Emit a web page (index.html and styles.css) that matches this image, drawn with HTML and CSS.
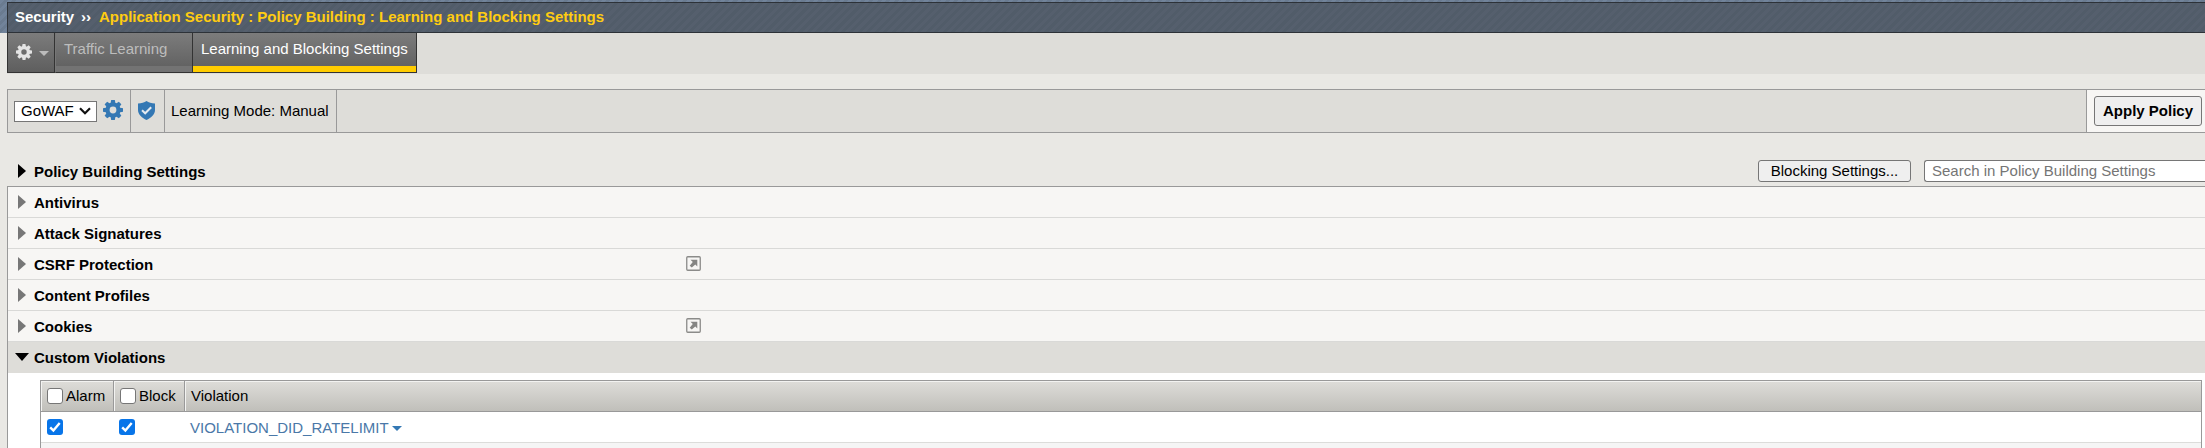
FILE: index.html
```html
<!DOCTYPE html>
<html lang="en">
<head>
<meta charset="utf-8">
<title>Learning and Blocking Settings</title>
<link rel="stylesheet" href="styles.css">
</head>
<body>
<svg class="defs" width="0" height="0" aria-hidden="true">
  <symbol id="gear" viewBox="0 0 20 20">
    <g fill="currentColor">
      <path fill-rule="evenodd" d="M10 2.500a7.500 7.500 0 1 0 0 15a7.500 7.500 0 1 0 0-15zM10 6.600a3.400 3.400 0 1 1 0 6.800a3.400 3.400 0 1 1 0-6.800z"/>
      <path id="tooth" d="M8.200 0h3.600l.8 4H7.400z"/>
      <use href="#tooth" transform="rotate(45 10 10)"/>
      <use href="#tooth" transform="rotate(90 10 10)"/>
      <use href="#tooth" transform="rotate(135 10 10)"/>
      <use href="#tooth" transform="rotate(180 10 10)"/>
      <use href="#tooth" transform="rotate(225 10 10)"/>
      <use href="#tooth" transform="rotate(270 10 10)"/>
      <use href="#tooth" transform="rotate(315 10 10)"/>
    </g>
  </symbol>
  <symbol id="popout" viewBox="0 0 15 15">
    <rect x=".75" y=".75" width="13.5" height="13.5" rx="1" fill="#f7f6f4" stroke="#8b8b89" stroke-width="1.3"/>
    <path d="M4.500 3.700h6.800v6.800L9.300 8.500 5.800 11.600 3.700 9.700 6.800 6z" fill="#858583"/>
  </symbol>
</svg>
<header class="masthead">
  <div class="crumbs"><span class="root">Security</span><span class="sep">››</span><span class="path">Application Security : Policy Building : Learning and Blocking Settings</span></div>
</header>
<nav class="tabs">
  <div class="tab tab-menu"><svg class="menu-gear"><use href="#gear"/></svg><i class="caret"></i></div>
  <div class="tab tab-traffic"><span>Traffic Learning</span></div>
  <div class="tab tab-active"><span>Learning and Blocking Settings</span></div>
</nav>
<section class="toolbar">
  <div class="cell policy">
    <div class="select"><span>GoWAF</span><svg width="12" height="8" viewBox="0 0 12 8"><path d="M1 1.300L6 6.300l5-5" fill="none" stroke="#111" stroke-width="2.200"/></svg></div>
    <svg class="blue-gear"><use href="#gear"/></svg>
  </div>
  <div class="cell shield">
    <svg width="17" height="19" viewBox="0 0 17 19"><path d="M8.500 0C6.400 1.700 3.500 2.400 0 2.400V9c0 4.800 4.400 8 8.500 10C12.600 17 17 13.800 17 9V2.400C13.500 2.400 10.600 1.700 8.500 0z" fill="#3478b4"/><path d="M4 9.200l3.200 3.100 6-6" fill="none" stroke="#e4eaf0" stroke-width="2"/></svg>
  </div>
  <div class="cell mode"><span>Learning Mode: Manual</span></div>
  <div class="apply"><button class="btn btn-apply">Apply Policy</button></div>
</section>
<section class="settings-head">
  <i class="arrow black"></i><h2>Policy Building Settings</h2>
  <button class="btn btn-blocking">Blocking Settings...</button>
  <input class="search" type="text" placeholder="Search in Policy Building Settings">
</section>
<main class="settings">
  <div class="row"><i class="arrow"></i><h3>Antivirus</h3></div>
  <div class="row"><i class="arrow"></i><h3>Attack Signatures</h3></div>
  <div class="row"><i class="arrow"></i><h3>CSRF Protection</h3><svg class="popout"><use href="#popout"/></svg></div>
  <div class="row"><i class="arrow"></i><h3>Content Profiles</h3></div>
  <div class="row"><i class="arrow"></i><h3>Cookies</h3><svg class="popout"><use href="#popout"/></svg></div>
  <div class="row open"><i class="arrow down"></i><h3>Custom Violations</h3></div>
  <div class="detail">
    <div class="table">
      <div class="grid thead">
        <div class="th"><i class="check"></i><span>Alarm</span></div>
        <div class="th"><i class="check"></i><span>Block</span></div>
        <div class="th"><span>Violation</span></div>
      </div>
      <div class="grid tbody">
        <div class="td"><i class="check on"><svg viewBox="0 0 16 16"><path d="M3.200 8.400l3.200 3.200 6.300-7.500"/></svg></i></div>
        <div class="td"><i class="check on"><svg viewBox="0 0 16 16"><path d="M3.200 8.400l3.200 3.200 6.300-7.500"/></svg></i></div>
        <div class="td"><a>VIOLATION_DID_RATELIMIT</a><i class="caret blue"></i></div>
      </div>
      <div class="next"></div>
    </div>
  </div>
</main>
</body>
</html>
```
FILE: styles.css
```css
* { box-sizing: border-box; }
html, body { height: 448px; overflow: hidden; }
body { margin: 0; background: #e9e8e4; color: #000; font: 15px/18px "Liberation Sans", Arial, sans-serif; white-space: nowrap; }
h2, h3 { margin: 0; font-size: 15px; line-height: 18px; font-weight: bold; }
svg { display: block; flex: none; }
i { display: block; flex: none; }
.defs { position: absolute; }

.masthead { height: 33px; padding: 2px 0 0 7px; background: repeating-linear-gradient(135deg, #71839a 0 3px, #6a7b90 3px 6px); }
.crumbs { display: flex; height: 31px; padding: 5px 0 0 7px; border: 1px solid #2d3238; border-right: 0; background: repeating-linear-gradient(135deg, #555f6d 0 3px, #515c69 3px 6px); font-weight: bold; }
.root { width: 66px; color: #fff; }
.sep { width: 18px; color: #fff; }
.path { color: #fc1; }

.tabs { display: flex; height: 41px; margin-left: 7px; background: #deddd9; }
.tab { height: 40px; border-right: 1px solid #333; border-bottom: 1px solid #333; background: linear-gradient(#7c7c7c, #5e5e5e); }
.tab-menu { display: flex; width: 48px; padding: 11px 0 0 8px; border-left: 1px solid #333; color: #e4e4e4; }
.menu-gear { width: 16px; height: 16px; }
.caret { width: 0; height: 0; border: 5px solid transparent; border-top-color: #bbb; border-bottom: 0; }
.tab-menu .caret { margin: 7px 0 0 7px; }
.tab-traffic { width: 138px; padding: 7px 0 0 8px; color: #bdbdbd; border-left: 1px solid #777; box-shadow: inset 0 -6px #737373; }
.tab-active { width: 224px; padding: 7px 0 0 8px; color: #fff; box-shadow: inset 0 -6px #fc0; }

.toolbar { display: flex; height: 44px; margin: 15px 0 0 7px; border: 1px solid #999; border-right: 0; background: #deddd9; }
.cell { display: flex; align-items: center; border-right: 1px solid #999; }
.policy { width: 123px; padding-left: 6px; }
.select { display: flex; align-items: center; justify-content: space-between; width: 83px; height: 21px; padding: 0 5px 0 6px; border: 1px solid #767676; background: #fff; }
.blue-gear { width: 20px; height: 20px; margin: -3px 0 0 6px; color: #3478b4; }
.shield { width: 34px; padding: 0 0 2px 7px; }
.mode { width: 172px; padding-left: 6px; }
.apply { width: 119px; margin-left: auto; padding: 6px 0 0 7px; border-left: 1px solid #999; background: #f7f6f4; }
.btn { padding: 0; border: 1px solid #767676; border-radius: 3px; background: #efefef; color: #000; font: 15px/18px "Liberation Sans", Arial, sans-serif; }
.btn-apply { width: 108px; height: 30px; font-weight: bold; }

.settings-head { display: flex; height: 53px; padding: 27px 0 0 18px; }
.arrow { width: 8px; height: 14px; margin-top: 4px; background: #777; clip-path: polygon(0 0, 100% 50%, 0 100%); }
.arrow.black { background: #000; }
.settings-head h2 { margin: 3px 0 0 8px; }
.btn-blocking { width: 153px; height: 22px; margin-left: auto; }
.search { width: 281px; height: 22px; margin-left: 13px; padding: 0 7px 1px; border: 1px solid #767676; border-right: 0; border-radius: 3px 0 0 3px; background: #fff; font: 15px/18px "Liberation Sans", Arial, sans-serif; outline: 0; }
.search::placeholder { color: #757575; opacity: 1; }

.settings { height: 262px; margin-left: 7px; border: 1px solid #999; border-right: 0; border-bottom: 0; background: #fff; }
.row { display: flex; height: 31px; padding: 7px 0 0 10px; border-bottom: 1px solid #d9d9d7; background: #f7f6f4; }
.row .arrow { margin-top: 1px; }
.row h3 { width: 652px; margin-left: 8px; }
.popout { width: 15px; height: 15px; }
.row.open { padding: 7px 0 0 7px; border-bottom: 0; background: #deddd9; }
.row .arrow.down { width: 14px; height: 8px; margin-top: 4px; background: #000; clip-path: polygon(0 0, 100% 0, 50% 100%); }
.row.open h3 { margin-left: 5px; }

.detail { padding: 7px 3px 0 32px; }
.table { height: 80px; border: 1px solid #999; border-bottom: 0; }
.grid { display: grid; grid-template-columns: 73px 71px 1fr; height: 31px; }
.thead { border-bottom: 1px solid #999; }
.th { display: flex; padding: 7px 0 0 6px; border-right: 1px solid #999; background: linear-gradient(#deddd9, #c0bfba); box-shadow: inset 1px 1px #f3f3f1; }
.th:last-child { border-right: 0; }
.th span { margin: -1px 0 0 3px; }
.th:last-child span { margin-left: 0; }
.check { width: 16px; height: 16px; border: 1px solid #767676; border-radius: 3px; background: #fff; }
.check.on { border: 0; background: #0875e9; }
.check path { fill: none; stroke: #fff; stroke-width: 2.4; }
.tbody { border-bottom: 1px solid #dcdcda; }
.td { display: flex; padding: 7px 0 0 6px; }
.td:nth-child(2), .td:nth-child(3) { padding-left: 5px; }
.td a { color: #4a78a8; }
.caret.blue { margin: 7px 0 0 3px; border-top-color: #3478b4; }
.next { height: 20px; background: #f5f5f5; }
```
